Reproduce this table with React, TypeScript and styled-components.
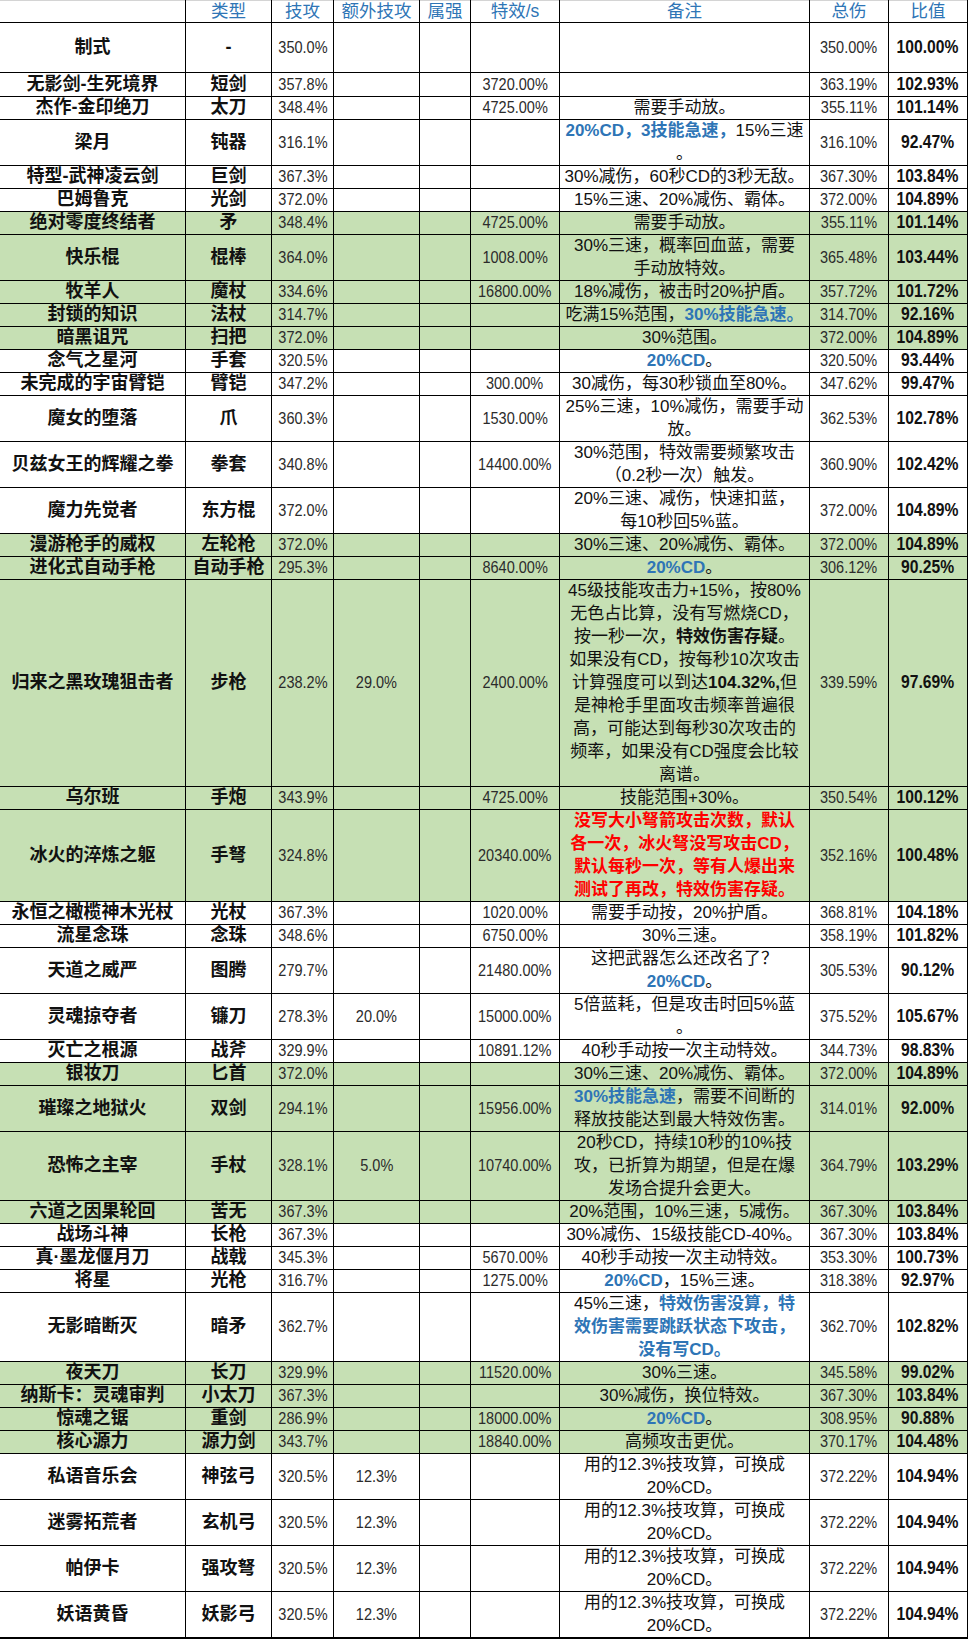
import React from "react";
import styled, { createGlobalStyle } from "styled-components";

// column widths, right border included
const COLUMNS = "186px 86px 62px 86px 51px 89px 250px 79px 79px";
const UNIT = 23;

type Kind = "name" | "type" | "num" | "note" | "ratio";

interface WeaponRow {
	name: string;
	type: string;
	atk: string;
	extra?: string;
	elem?: string;
	effect?: string;
	note?: React.ReactNode;
	total: string;
	ratio: string;
	height?: number;
	green?: boolean;
}

const GlobalStyle = createGlobalStyle`
	body {
		margin: 0;
		background: #fff;
		font-family: "Liberation Sans", "Noto Sans CJK SC", sans-serif;
		color: #1a1a1a;
	}
`;

const Sheet = styled.div`
	width: 968px;
	border-bottom: 2px solid #000;
`;

const Row = styled.div<{ $h: number; $green?: boolean }>`
	display: grid;
	grid-template-columns: ${COLUMNS};
	height: ${(p) => p.$h}px;
	background: ${(p) => (p.$green ? "#c6e0b4" : "#fff")};
`;

const HeaderRow = styled(Row)`
	box-shadow: inset 0 1px 0 #d4d4d4;
`;

const Cell = styled.div<{ $kind: Kind }>`
	box-sizing: border-box;
	border-right: 1px solid #000;
	border-bottom: 1px solid #000;
	display: flex;
	align-items: center;
	justify-content: center;
	text-align: center;
	white-space: nowrap;
	line-height: ${UNIT}px;
	font-size: ${(p) => {
		if (p.$kind === "name" || p.$kind === "type") return "18px";
		if (p.$kind === "note") return "17px";
		if (p.$kind === "ratio") return "18px";
		return "16.5px";
	}};
	font-weight: ${(p) =>
		p.$kind === "name" || p.$kind === "type" || p.$kind === "ratio" ? 700 : 400};
	color: ${(p) => (p.$kind === "num" ? "#2b2b2b" : "#111")};
`;

// spreadsheet digits are tall and narrow
const Digits = styled.span<{ $bold?: boolean }>`
	display: inline-block;
	transform: scaleX(${(p) => (p.$bold ? 0.87 : 0.88)});
`;

const HeadCell = styled.div`
	box-sizing: border-box;
	border-right: 1px solid #000;
	border-bottom: 1px solid #000;
	display: flex;
	align-items: flex-end;
	justify-content: center;
	padding-bottom: 1px;
	font-size: 17.5px;
	line-height: 20px;
	color: #2e75b6;
	white-space: nowrap;
`;

const Note = styled.div`
	line-height: ${UNIT}px;
`;

const Hi = styled.b`
	color: #2e75b6;
`;

const Warn = styled.b`
	color: #ff0000;
`;

const headers = ["", "类型", "技攻", "额外技攻", "属强", "特效/s", "备注", "总伤", "比值"];

const bowNote = (
	<>
		用的12.3%技攻算，可换成
		<br />
		20%CD。
	</>
);

const rows: WeaponRow[] = [
	{ name: "制式", type: "-", atk: "350.0%", total: "350.00%", ratio: "100.00%", height: 50 },
	{ name: "无影剑-生死境界", type: "短剑", atk: "357.8%", effect: "3720.00%", total: "363.19%", ratio: "102.93%" },
	{ name: "杰作-金印绝刀", type: "太刀", atk: "348.4%", effect: "4725.00%", note: "需要手动放。", total: "355.11%", ratio: "101.14%" },
	{
		name: "梁月", type: "钝器", atk: "316.1%", total: "316.10%", ratio: "92.47%", height: 2,
		note: (<><Hi>20%CD，3技能急速，</Hi>15%三速<br />。</>),
	},
	{ name: "特型-武神凌云剑", type: "巨剑", atk: "367.3%", note: "30%减伤，60秒CD的3秒无敌。", total: "367.30%", ratio: "103.84%" },
	{ name: "巴姆鲁克", type: "光剑", atk: "372.0%", note: "15%三速、20%减伤、霸体。", total: "372.00%", ratio: "104.89%" },
	{ name: "绝对零度终结者", type: "矛", atk: "348.4%", effect: "4725.00%", note: "需要手动放。", total: "355.11%", ratio: "101.14%", green: true },
	{
		name: "快乐棍", type: "棍棒", atk: "364.0%", effect: "1008.00%", total: "365.48%", ratio: "103.44%", height: 2, green: true,
		note: (<>30%三速，概率回血蓝，需要<br />手动放特效。</>),
	},
	{ name: "牧羊人", type: "魔杖", atk: "334.6%", effect: "16800.00%", note: "18%减伤，被击时20%护盾。", total: "357.72%", ratio: "101.72%", green: true },
	{
		name: "封锁的知识", type: "法杖", atk: "314.7%", total: "314.70%", ratio: "92.16%", green: true,
		note: (<>吃满15%范围，<Hi>30%技能急速。</Hi></>),
	},
	{ name: "暗黑诅咒", type: "扫把", atk: "372.0%", note: "30%范围。", total: "372.00%", ratio: "104.89%", green: true },
	{ name: "念气之星河", type: "手套", atk: "320.5%", note: (<><Hi>20%CD</Hi>。</>), total: "320.50%", ratio: "93.44%" },
	{ name: "未完成的宇宙臂铠", type: "臂铠", atk: "347.2%", effect: "300.00%", note: "30减伤，每30秒锁血至80%。", total: "347.62%", ratio: "99.47%" },
	{
		name: "魔女的堕落", type: "爪", atk: "360.3%", effect: "1530.00%", total: "362.53%", ratio: "102.78%", height: 2,
		note: (<>25%三速，10%减伤，需要手动<br />放。</>),
	},
	{
		name: "贝兹女王的辉耀之拳", type: "拳套", atk: "340.8%", effect: "14400.00%", total: "360.90%", ratio: "102.42%", height: 2,
		note: (<>30%范围，特效需要频繁攻击<br />（0.2秒一次）触发。</>),
	},
	{
		name: "魔力先觉者", type: "东方棍", atk: "372.0%", total: "372.00%", ratio: "104.89%", height: 2,
		note: (<>20%三速、减伤，快速扣蓝，<br />每10秒回5%蓝。</>),
	},
	{ name: "漫游枪手的威权", type: "左轮枪", atk: "372.0%", note: "30%三速、20%减伤、霸体。", total: "372.00%", ratio: "104.89%", green: true },
	{ name: "进化式自动手枪", type: "自动手枪", atk: "295.3%", effect: "8640.00%", note: (<><Hi>20%CD</Hi>。</>), total: "306.12%", ratio: "90.25%", green: true },
	{
		name: "归来之黑玫瑰狙击者", type: "步枪", atk: "238.2%", extra: "29.0%", effect: "2400.00%", total: "339.59%", ratio: "97.69%", height: 207, green: true,
		note: (
			<>
				45级技能攻击力+15%，按80%<br />
				无色占比算，没有写燃烧CD，<br />
				按一秒一次，<b>特效伤害存疑</b>。<br />
				如果没有CD，按每秒10次攻击<br />
				计算强度可以到达<b>104.32%,</b>但<br />
				是神枪手里面攻击频率普遍很<br />
				高，可能达到每秒30次攻击的<br />
				频率，如果没有CD强度会比较<br />
				离谱。
			</>
		),
	},
	{ name: "乌尔班", type: "手炮", atk: "343.9%", effect: "4725.00%", note: "技能范围+30%。", total: "350.54%", ratio: "100.12%", green: true },
	{
		name: "冰火的淬炼之躯", type: "手弩", atk: "324.8%", effect: "20340.00%", total: "352.16%", ratio: "100.48%", height: 4, green: true,
		note: (
			<Warn>
				没写大小弩箭攻击次数，默认<br />
				各一次，冰火弩没写攻击CD，<br />
				默认每秒一次，等有人爆出来<br />
				测试了再改，特效伤害存疑。
			</Warn>
		),
	},
	{ name: "永恒之橄榄神木光杖", type: "光杖", atk: "367.3%", effect: "1020.00%", note: "需要手动按，20%护盾。", total: "368.81%", ratio: "104.18%" },
	{ name: "流星念珠", type: "念珠", atk: "348.6%", effect: "6750.00%", note: "30%三速。", total: "358.19%", ratio: "101.82%" },
	{
		name: "天道之威严", type: "图腾", atk: "279.7%", effect: "21480.00%", total: "305.53%", ratio: "90.12%", height: 2,
		note: (<>这把武器怎么还改名了？<br /><Hi>20%CD</Hi>。</>),
	},
	{
		name: "灵魂掠夺者", type: "镰刀", atk: "278.3%", extra: "20.0%", effect: "15000.00%", total: "375.52%", ratio: "105.67%", height: 2,
		note: (<>5倍蓝耗，但是攻击时回5%蓝<br />。</>),
	},
	{ name: "灭亡之根源", type: "战斧", atk: "329.9%", effect: "10891.12%", note: "40秒手动按一次主动特效。", total: "344.73%", ratio: "98.83%" },
	{ name: "银妆刀", type: "匕首", atk: "372.0%", note: "30%三速、20%减伤、霸体。", total: "372.00%", ratio: "104.89%", green: true },
	{
		name: "璀璨之地狱火", type: "双剑", atk: "294.1%", effect: "15956.00%", total: "314.01%", ratio: "92.00%", height: 2, green: true,
		note: (<><Hi>30%技能急速</Hi>，需要不间断的<br />释放技能达到最大特效伤害。</>),
	},
	{
		name: "恐怖之主宰", type: "手杖", atk: "328.1%", extra: "5.0%", effect: "10740.00%", total: "364.79%", ratio: "103.29%", height: 3, green: true,
		note: (<>20秒CD，持续10秒的10%技<br />攻，已折算为期望，但是在爆<br />发场合提升会更大。</>),
	},
	{ name: "六道之因果轮回", type: "苦无", atk: "367.3%", note: "20%范围，10%三速，5减伤。", total: "367.30%", ratio: "103.84%", green: true },
	{ name: "战场斗神", type: "长枪", atk: "367.3%", note: "30%减伤、15级技能CD-40%。", total: "367.30%", ratio: "103.84%" },
	{ name: "真·墨龙偃月刀", type: "战戟", atk: "345.3%", effect: "5670.00%", note: "40秒手动按一次主动特效。", total: "353.30%", ratio: "100.73%" },
	{ name: "将星", type: "光枪", atk: "316.7%", effect: "1275.00%", note: (<><Hi>20%CD</Hi>，15%三速。</>), total: "318.38%", ratio: "92.97%" },
	{
		name: "无影暗断灭", type: "暗矛", atk: "362.7%", total: "362.70%", ratio: "102.82%", height: 3,
		note: (<>45%三速，<Hi>特效伤害没算，特<br />效伤害需要跳跃状态下攻击，<br />没有写CD。</Hi></>),
	},
	{ name: "夜天刀", type: "长刀", atk: "329.9%", effect: "11520.00%", note: "30%三速。", total: "345.58%", ratio: "99.02%", green: true },
	{ name: "纳斯卡：灵魂审判", type: "小太刀", atk: "367.3%", note: "30%减伤，换位特效。", total: "367.30%", ratio: "103.84%", green: true },
	{ name: "惊魂之锯", type: "重剑", atk: "286.9%", effect: "18000.00%", note: (<><Hi>20%CD</Hi>。</>), total: "308.95%", ratio: "90.88%", green: true },
	{ name: "核心源力", type: "源力剑", atk: "343.7%", effect: "18840.00%", note: "高频攻击更优。", total: "370.17%", ratio: "104.48%", green: true },
	{ name: "私语音乐会", type: "神弦弓", atk: "320.5%", extra: "12.3%", note: bowNote, total: "372.22%", ratio: "104.94%", height: 2 },
	{ name: "迷雾拓荒者", type: "玄机弓", atk: "320.5%", extra: "12.3%", note: bowNote, total: "372.22%", ratio: "104.94%", height: 2 },
	{ name: "帕伊卡", type: "强攻弩", atk: "320.5%", extra: "12.3%", note: bowNote, total: "372.22%", ratio: "104.94%", height: 2 },
	{ name: "妖语黄昏", type: "妖影弓", atk: "320.5%", extra: "12.3%", note: bowNote, total: "372.22%", ratio: "104.94%", height: 2 },
];

// heights under 10 are counted in row units
const rowHeight = (h?: number) => {
	if (!h) return UNIT;
	return h < 10 ? h * UNIT : h;
};

const num = (value?: string, bold?: boolean) =>
	value ? <Digits $bold={bold}>{value}</Digits> : null;

const App: React.FC = () => {
	return (
		<>
			<GlobalStyle />
			<Sheet>
				<HeaderRow $h={UNIT}>
					{headers.map((label, i) => (
						<HeadCell key={i}>{label}</HeadCell>
					))}
				</HeaderRow>
				{rows.map((row) => (
					<Row key={row.name} $h={rowHeight(row.height)} $green={row.green}>
						<Cell $kind="name">{row.name}</Cell>
						<Cell $kind="type">{row.type}</Cell>
						<Cell $kind="num">{num(row.atk)}</Cell>
						<Cell $kind="num">{num(row.extra)}</Cell>
						<Cell $kind="num">{num(row.elem)}</Cell>
						<Cell $kind="num">{num(row.effect)}</Cell>
						<Cell $kind="note">
							<Note>{row.note}</Note>
						</Cell>
						<Cell $kind="num">{num(row.total)}</Cell>
						<Cell $kind="ratio">{num(row.ratio, true)}</Cell>
					</Row>
				))}
			</Sheet>
		</>
	);
};

export default App;
